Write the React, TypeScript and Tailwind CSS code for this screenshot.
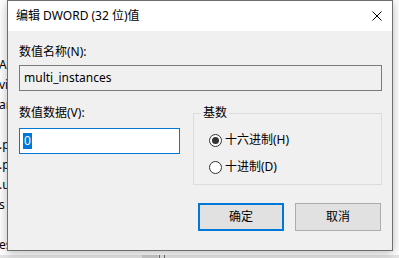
import React from 'react';

const font = { fontFamily: '"Noto Sans", "Noto Sans CJK SC", sans-serif' };

const bgLines = ['Ap', 'vi', 'ar', '', '.p', '.p', '.u', 's', '', 'es'];

function Radio({ checked, label }: { checked?: boolean; label: string }) {
  return (
    <div className="flex items-center h-[16px]">
      <span className="w-[13px] h-[13px] rounded-full border border-[#333333] bg-white flex items-center justify-center">
        {checked && <span className="w-[7px] h-[7px] rounded-full bg-[#333333]" />}
      </span>
      <span className="ml-[3px] text-[12px] leading-[16px] text-black">{label}</span>
    </div>
  );
}

export default function App() {
  return (
    <div className="relative w-[399px] h-[258px] overflow-hidden bg-white" style={font}>
      {/* window underneath */}
      <div className="flex flex-col h-full">
        <div className="flex-1 pt-[55px]">
          {bgLines.map((t, i) => (
            <div key={i} className="h-[20px] leading-[20px] text-[12px] text-black -ml-[1px]">
              {t}
            </div>
          ))}
        </div>
        <div className="h-[8px] bg-[#e4e4e4] flex">
          <div className="w-[142px]" />
          <div className="w-[16px] bg-[#cbcbcb]" />
          <div className="w-[1px] ml-[1px] bg-[#6d6d6d]" />
          <div className="w-[1px] ml-[4px] bg-[#6d6d6d]" />
        </div>
      </div>

      {/* dialog */}
      <div className="absolute left-[7px] top-0 w-[386px] h-[251px] border border-[#6e6e6e] bg-[#f0f0f0] shadow-[0_2px_10px_rgba(0,0,0,0.28)] flex flex-col">
        <div className="h-[30px] bg-white flex items-center justify-between pl-[8px] pr-[10px]">
          <span className="text-[12px] text-black leading-[16px]">编辑 DWORD (32 位)值</span>
          <svg width="10" height="10" viewBox="0 0 10 10" className="shrink-0">
            <path d="M0.5 0.5 L9.5 9.5 M9.5 0.5 L0.5 9.5" stroke="#000" strokeWidth="1" />
          </svg>
        </div>

        <div className="flex-1 flex flex-col pl-[11px] pr-[10px] pt-[13px]">
          <div className="text-[12px] leading-[16px] text-black">数值名称(N):</div>
          <div className="mt-[5px] h-[26px] border border-[#7a7a7a] bg-[#f0f0f0] flex items-center pl-[4px] text-[12px] text-black">
            multi_instances
          </div>

          <div className="mt-[14px] flex">
            <div className="w-[161px] flex flex-col">
              <div className="text-[12px] leading-[16px] text-black">数值数据(V):</div>
              <div className="mt-[7px] h-[26px] border border-[#0078d7] bg-white flex items-center pl-[3px]">
                <span className="bg-[#0078d7] text-white text-[12px] leading-[16px] px-[1px]">0</span>
              </div>
            </div>

            <fieldset className="ml-[13px] w-[189px] h-[80px] border border-[#dcdcdc] pl-[15px]">
              <legend className="ml-[-8px] px-[2px] text-[12px] leading-[16px] text-black">基数</legend>
              <div className="mt-[11px] flex flex-col gap-[11px]">
                <Radio checked label="十六进制(H)" />
                <Radio label="十进制(D)" />
              </div>
            </fieldset>
          </div>

          <div className="mt-[18px] flex justify-end gap-[11px] pr-[1px]">
            <button className="w-[86px] h-[28px] border-2 border-[#0078d7] bg-[#e1e1e1] text-[12px] text-black">
              确定
            </button>
            <button className="w-[86px] h-[28px] border border-[#adadad] bg-[#e1e1e1] text-[12px] text-black">
              取消
            </button>
          </div>
        </div>
      </div>
    </div>
  );
}
